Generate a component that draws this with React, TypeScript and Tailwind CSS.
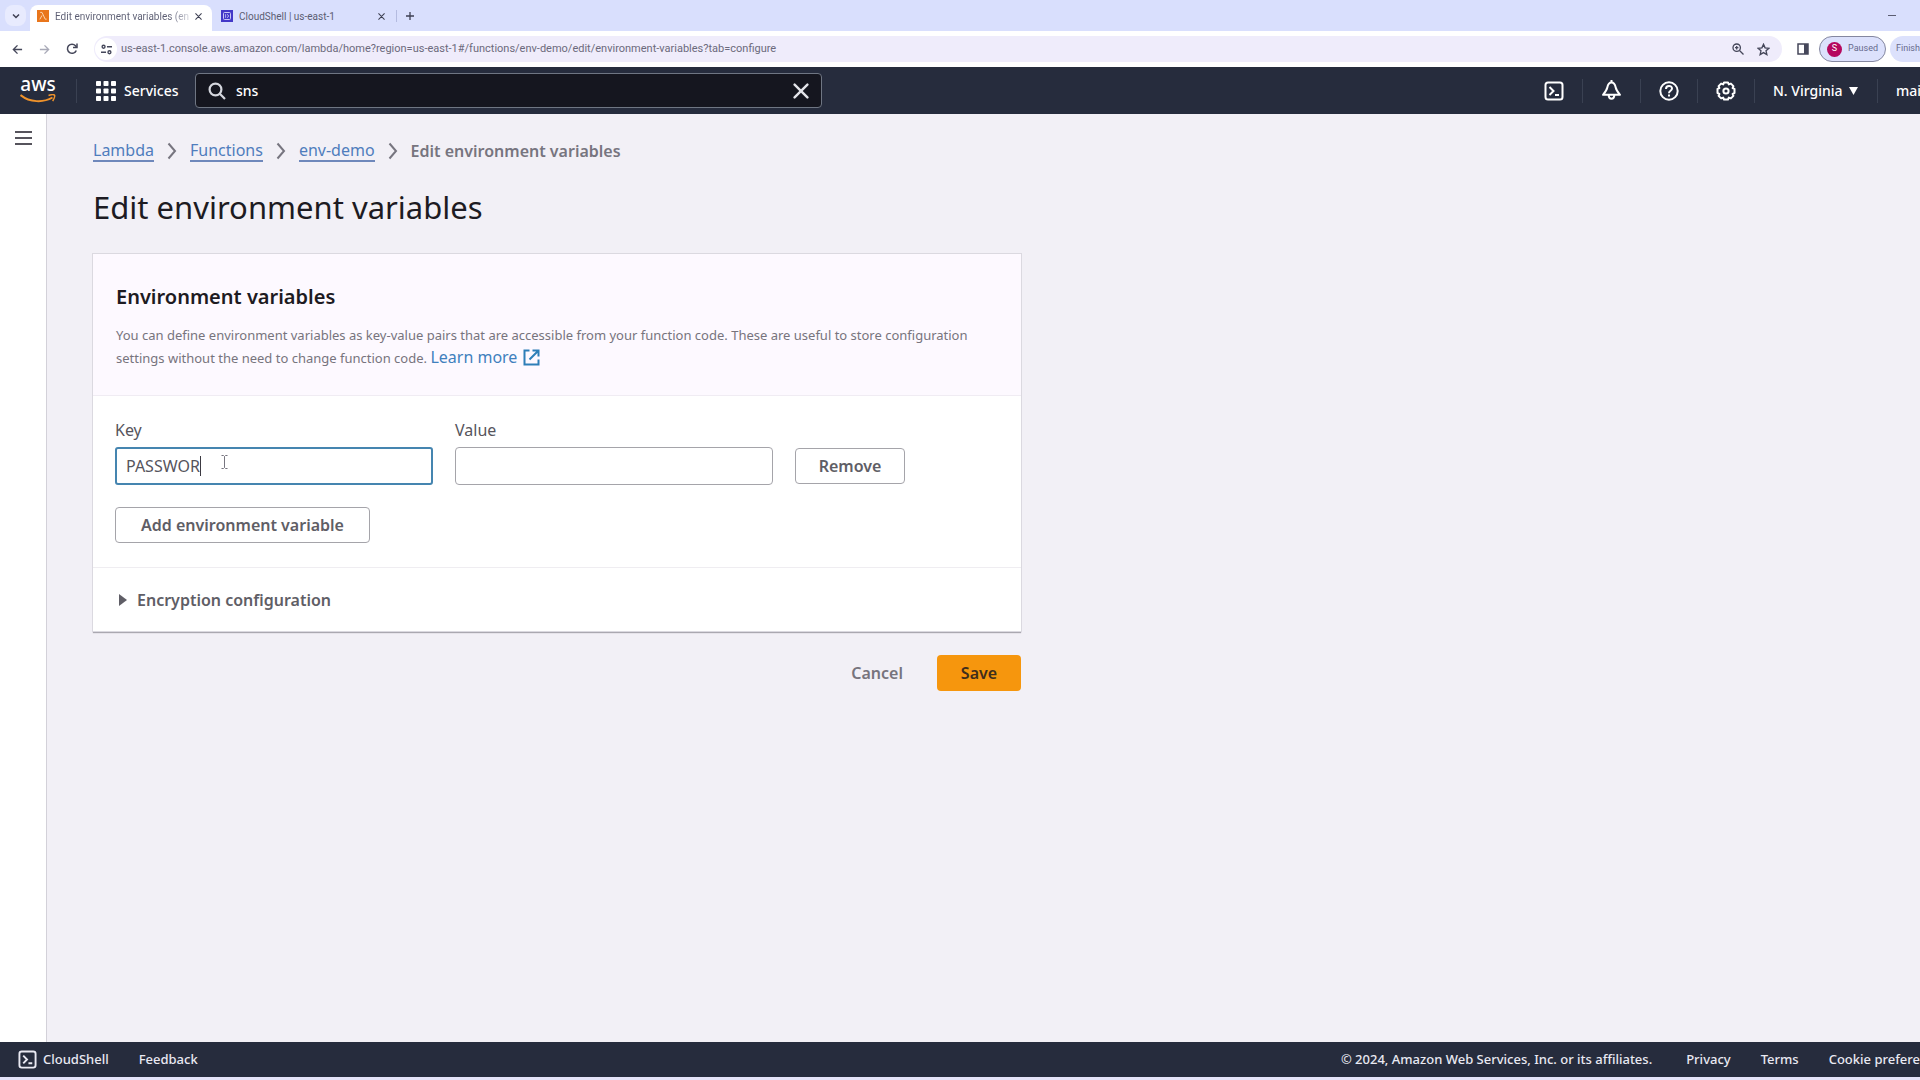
import React from "react";

function LambdaFavicon() {
  return (
    <svg className="size-3 shrink-0" viewBox="0 0 12 12" aria-hidden="true">
      <rect width="12" height="12" fill="#e9761c" />
      <path d="M3.2 2.4h1.8l3.2 6.8h1.4M5 5.4 2.8 9.4" fill="none" stroke="#fbd3ac" strokeWidth="1" />
    </svg>
  );
}

function CloudShellFavicon() {
  return (
    <svg className="size-3 shrink-0" viewBox="0 0 12 12" aria-hidden="true">
      <rect width="12" height="12" fill="#4338c8" />
      <rect x="2.5" y="2.5" width="7" height="7" rx="1" fill="none" stroke="#c9c6f6" strokeWidth="1" />
      <path d="M4.6 4.2v3.6M6 4.4c2 .3 2 2.900 0 3.200" fill="none" stroke="#c9c6f6" strokeWidth="0.800" />
    </svg>
  );
}

function Cross({ className }: { className: string }) {
  return (
    <svg className={className} viewBox="0 0 10 10" fill="none" stroke="currentColor" aria-hidden="true">
      <path d="m1 1 8 8M9 1 1 9" strokeWidth="1.500" strokeLinecap="round" />
    </svg>
  );
}

function Back({ className }: { className: string }) {
  return (
    <svg className={className} viewBox="0 0 12 12" fill="none" stroke="currentColor" strokeWidth="1.500" aria-hidden="true">
      <path d="M11 6H1.500M6 1.500 1.500 6 6 10.500" />
    </svg>
  );
}

function ShellIcon({ className }: { className: string }) {
  return (
    <svg className={className} viewBox="0 0 20 20" fill="none" stroke="currentColor" strokeWidth="2" aria-hidden="true">
      <rect x="1.500" y="1.500" width="17" height="17" rx="2.500" />
      <path d="m5.500 6 4 4-4 4M11 14h4" />
    </svg>
  );
}

function AwsLogo() {
  return (
    <a href="#home" aria-label="AWS home" className="flex w-9 shrink-0 flex-col items-center">
      <span className="h-4 text-[19px] leading-[12px] font-medium text-white">aws</span>
      <svg className="h-2.5 w-9" viewBox="0 0 36 10" fill="none" aria-hidden="true">
        <path d="M0.500 1C10 8.500 23 9 32.500 3.500" stroke="#f0932b" strokeWidth="2" />
        <path d="M28.500 1.500c3-1 5.500-1 6 -.3.500.8-.3 3.500-1.800 6" stroke="#f0932b" strokeWidth="1.500" />
      </svg>
    </a>
  );
}

function BrowserTabs() {
  return (
    <div className="flex h-[31px] items-end bg-[#d9dffd] font-[Roboto,sans-serif] text-[10px] text-[#5b5d72]">
      <button aria-label="Search tabs" className="mb-[5px] ml-[5px] flex size-[21px] shrink-0 items-center justify-center rounded-lg bg-[#e8ebfe]">
        <svg className="h-2 w-2" viewBox="0 0 8 8" fill="none" stroke="#3e4053" strokeWidth="1.500" aria-hidden="true">
          <path d="m1 2.500 3 3 3-3" />
        </svg>
      </button>
      <div className="ml-1 flex h-[26px] w-[182px] items-center rounded-t-lg bg-white pr-[10px] pb-1 pl-[7px]">
        <LambdaFavicon />
        <span className="ml-[6px] bg-gradient-to-r from-[#5b5d72] from-85% to-[#d5d6de] bg-clip-text whitespace-nowrap text-transparent">
          Edit environment variables (en
        </span>
        <button aria-label="Close tab" className="ml-auto text-[#3e4053]"><Cross className="size-[7px]" /></button>
      </div>
      <div className="flex h-[26px] w-[185px] items-center pb-1 pl-[9px]">
        <CloudShellFavicon />
        <span className="ml-[6px] whitespace-nowrap">CloudShell | us-east-1</span>
        <button aria-label="Close tab" className="ml-auto text-[#3e4053]"><Cross className="size-[7px]" /></button>
        <span className="ml-[11px] h-3 w-px bg-[#b4bbe0]" />
      </div>
      <button aria-label="New tab" className="mb-[11px] ml-[9px] text-[#3e4053]">
        <svg className="size-2" viewBox="0 0 8 8" stroke="currentColor" strokeWidth="1.300" aria-hidden="true"><path d="M4 0v8M0 4h8" /></svg>
      </button>
      <button aria-label="Minimize" className="mr-6 mb-[15px] ml-auto h-px w-2 bg-[#5b5d72]" />
    </div>
  );
}

function AddressBar() {
  return (
    <div className="flex h-9 items-center overflow-hidden bg-white font-[Roboto,sans-serif] text-[#45475a]">
      <div className="flex w-[94px] shrink-0 items-center gap-4 pl-3">
        <button aria-label="Back"><Back className="size-[11px]" /></button>
        <button aria-label="Forward" className="text-[#a9aab8]"><Back className="size-[11px] rotate-180" /></button>
        <button aria-label="Reload">
          <svg className="size-3" viewBox="0 0 12 12" fill="none" stroke="currentColor" strokeWidth="1.500" aria-hidden="true">
            <path d="M10.300 7.500A4.600 4.600 0 1 1 9.500 2.700L10.500 4" />
            <path d="M11 .5v4H7" />
          </svg>
        </button>
      </div>
      <div className="flex h-[26px] min-w-0 flex-1 items-center rounded-full bg-[#efecfb] pr-3 pl-px">
        <button aria-label="View site information" className="flex size-[22px] shrink-0 items-center justify-center rounded-full bg-white">
          <svg className="size-[11px]" viewBox="0 0 12 12" fill="none" stroke="currentColor" strokeWidth="1.500" aria-hidden="true">
            <circle cx="2.800" cy="3" r="1.600" />
            <path d="M6.500 3H12M0 9h5.500" />
            <circle cx="9.200" cy="9" r="1.600" />
          </svg>
        </button>
        <input
          aria-label="Address"
          readOnly
          className="ml-1 min-w-0 flex-1 bg-transparent text-[11px] text-[#6c6a7c] outline-none"
          value="us-east-1.console.aws.amazon.com/lambda/home?region=us-east-1#/functions/env-demo/edit/environment-variables?tab=configure"
        />
        <button aria-label="Zoom">
          <svg className="size-3" viewBox="0 0 12 12" fill="none" stroke="currentColor" strokeWidth="1.300" aria-hidden="true">
            <circle cx="4.700" cy="4.700" r="3.700" />
            <path d="m7.500 7.500 4 4M3 4.700h3.400M4.700 3v3.400" />
          </svg>
        </button>
        <button aria-label="Bookmark" className="ml-[13px]">
          <svg className="size-[13px]" viewBox="0 0 24 24" fill="none" stroke="currentColor" strokeWidth="2.500" aria-hidden="true">
            <path d="m12 2.500 2.900 6.500 7.100.7-5.300 4.700 1.500 7-6.200-3.700-6.200 3.700 1.500-7L2 9.700 9.100 9z" />
          </svg>
        </button>
      </div>
      <button aria-label="Side panel" className="ml-[15px] shrink-0">
        <svg className="size-3" viewBox="0 0 12 12" aria-hidden="true">
          <rect x="1" y="1" width="10" height="10" fill="none" stroke="currentColor" strokeWidth="1.500" />
          <rect x="7" y="1" width="4" height="10" fill="currentColor" />
        </svg>
      </button>
      <button className="ml-[10px] flex h-[26px] w-[67px] shrink-0 items-center gap-[6px] rounded-full border border-[#8487a0] bg-[#dce1fc] pl-[7px] text-[9px] text-[#666a8c]">
        <span className="flex size-[15px] items-center justify-center rounded-full bg-[#b5085e] text-white">S</span>
        Paused
      </button>
      <button className="ml-1 h-[26px] w-[30px] shrink-0 rounded-l-full bg-[#dce1fc] pl-[6px] text-left text-[9px] whitespace-nowrap text-[#666a8c]">
        Finish
      </button>
    </div>
  );
}

function Divider() {
  return <span className="h-6 w-px shrink-0 bg-[#3a4152]" />;
}

function ConsoleHeader() {
  return (
    <header className="flex h-[47px] items-center overflow-hidden bg-[#262c3d] text-sm font-medium text-white">
      <div className="flex w-[195px] shrink-0 items-center pl-5">
        <AwsLogo />
        <span className="ml-5"><span className="block h-6 w-px bg-[#3a4152]" /></span>
        <button className="ml-[19px] flex items-center gap-2">
          <svg className="size-5" viewBox="0 0 20 20" fill="currentColor" aria-hidden="true">
            {[0, 7.500, 15].map((y) =>
              [0, 7.500, 15].map((x) => <rect key={`${x}-${y}`} x={x} y={y} width="5" height="5" rx="0.800" />)
            )}
          </svg>
          Services
        </button>
      </div>
      <div className="flex h-[35px] w-[627px] items-center rounded-sm border border-[#6f7683] bg-[#15161f] pr-3 pl-3">
        <svg className="size-[18px] shrink-0" viewBox="0 0 18 18" fill="none" stroke="#d5d7de" strokeWidth="2.200" aria-hidden="true">
          <circle cx="7.500" cy="7.500" r="5.900" />
          <path d="m11.800 11.800 5.200 5.200" />
        </svg>
        <input aria-label="Search" defaultValue="sns" className="ml-[10px] min-w-0 flex-1 bg-transparent outline-none" />
        <button aria-label="Clear search"><Cross className="size-4 text-[#e4e5ea]" /></button>
      </div>
      <div className="ml-auto flex shrink-0 items-center">
        <button aria-label="CloudShell" className="mr-[18px]"><ShellIcon className="size-5" /></button>
        <Divider />
        <button aria-label="Notifications" className="mx-[18px]">
          <svg className="size-[21px]" viewBox="0 0 21 21" fill="none" stroke="currentColor" strokeWidth="2" strokeLinejoin="round" aria-hidden="true">
            <path d="M10.500 2.500C7.800 2.500 6.800 5 6.300 7.500 5.700 10.500 4 12.500 2 14.800h17c-2-2.300-3.700-4.300-4.300-7.300-.5-2.500-1.500-5-4.200-5z" />
            <path d="M7.700 15c0 2 1 3.800 2.800 3.800s2.800-1.800 2.800-3.800M10.500 0v2.500" />
          </svg>
        </button>
        <Divider />
        <button aria-label="Help" className="mx-[18px]">
          <svg className="size-5" viewBox="0 0 20 20" fill="none" stroke="currentColor" strokeWidth="2" aria-hidden="true">
            <circle cx="10" cy="10" r="8.700" />
            <path d="M7 8c0-4 6-4 6-.5 0 2.300-3 2.200-3 4.700M10 13.500v2" />
          </svg>
        </button>
        <Divider />
        <button aria-label="Settings" className="mx-[18px]">
          <svg className="size-5" viewBox="0 0 20 20" fill="none" stroke="currentColor" strokeWidth="2" strokeLinejoin="round" aria-hidden="true">
            <path d="M8 1.500h4l.8 1.900 2.100-.8 2.500 2.500-.8 2.100 1.900.8v4l-1.900.8.8 2.100-2.500 2.500-2.100-.8-.8 1.900H8l-.8-1.900-2.100.8-2.500-2.500.8-2.100-1.900-.8V8l1.900-.8-.8-2.100 2.500-2.500 2.100.8z" />
            <circle cx="10" cy="10" r="2.600" />
          </svg>
        </button>
        <Divider />
        <button className="ml-[18px] flex w-[104px] items-center gap-[6px] whitespace-nowrap">
          N. Virginia
          <svg className="h-2 w-[9px] shrink-0" viewBox="0 0 9 8" fill="currentColor" aria-hidden="true"><path d="M0 0h9L4.500 8z" /></svg>
        </button>
        <Divider />
        <button className="ml-[18px] w-6 text-left">mai</button>
      </div>
    </header>
  );
}

function Chevron() {
  return (
    <svg className="h-[18px] w-[10px] shrink-0" viewBox="0 0 10 18" fill="none" stroke="#77757f" strokeWidth="2" aria-hidden="true">
      <path d="m1.500 1.500 6.500 7.500-6.500 7.500" />
    </svg>
  );
}

function Breadcrumbs() {
  const link = "border-b-2 border-[#6f88bb] leading-5 text-[#4f7dbd]";
  return (
    <nav aria-label="Breadcrumb" className="flex items-center gap-[13px] text-base">
      <a href="#lambda" className={link}>Lambda</a>
      <Chevron />
      <a href="#functions" className={link}>Functions</a>
      <Chevron />
      <a href="#env-demo" className={link}>env-demo</a>
      <Chevron />
      <span className="font-semibold text-[#77757f]">Edit environment variables</span>
    </nav>
  );
}

const outlineButton =
  "h-9 rounded-sm border border-[#a5a4aa] bg-white text-base font-semibold whitespace-nowrap text-[#5f5e66]";

function VariablesCard() {
  return (
    <section className="mt-[27px] bg-white shadow-[0_0_0_1px_#dbd9e0,0_2px_1px_#aaa8b0]">
      <div className="h-[142px] border-b border-[#f0ecf3] bg-[#fdf9ff] px-[23px] pt-[29px]">
        <h2 className="text-xl leading-7 font-semibold text-[#1d1b22]">Environment variables</h2>
        <p className="mt-[13px] text-[13px] leading-[22px] text-[#77747d]">
          You can define environment variables as key-value pairs that are accessible from your function code. These are
          useful to store configuration
          <br />
          settings without the need to change function code.{" "}
          <a href="#learn-more" className="text-base leading-[22px] whitespace-nowrap text-[#4080bd]">
            Learn more
            <svg className="ml-[6px] inline-block size-[17px] align-[-3px]" viewBox="0 0 17 17" fill="none" stroke="#2e7fb8" strokeWidth="2" aria-hidden="true">
              <path d="M6.500 1.500H1.500v14h14v-5M9.500 1.500h6v6M15.500 1.500 6.500 10.500" />
            </svg>
          </a>
        </p>
      </div>
      <div className="px-[22px] pt-[23px] pb-6">
        <div className="flex items-end gap-[22px]">
          <div className="flex w-[318px] flex-col gap-[6px]">
            <label htmlFor="key" className="text-base leading-[22px] text-[#56545c]">Key</label>
            <div className="relative">
              <input
                id="key"
                defaultValue="PASSWOR"
                className="block h-[38px] w-full rounded-[3px] border-2 border-[#4585b0] bg-white px-[9px] text-base text-[#56545c] outline-none"
              />
              <span className="absolute top-[9px] left-[85px] h-5 w-px bg-[#3c3a42]" />
              <svg className="absolute top-2 left-[106px] h-[14px] w-[7px]" viewBox="0 0 7 14" fill="none" stroke="#77757f" aria-hidden="true">
                <path d="M0.500 .5h2l1 1 1-1h2M3.500 1.500v11M.5 13.500h2l1-1 1 1h2" />
              </svg>
            </div>
          </div>
          <div className="flex w-[318px] flex-col gap-[6px]">
            <label htmlFor="value" className="text-base leading-[22px] text-[#56545c]">Value</label>
            <input id="value" className="block h-[38px] w-full rounded-sm border border-[#a5a4aa] bg-white px-[9px] text-base outline-none" />
          </div>
          <button className={`${outlineButton} mb-px w-[110px]`}>Remove</button>
        </div>
        <button className={`${outlineButton} mt-[22px] w-[255px]`}>Add environment variable</button>
      </div>
      <div className="flex h-16 items-center border-t border-[#efedf1] px-[22px]">
        <button className="flex items-center gap-[10px] pl-1 text-base font-semibold text-[#5f5e66]">
          <svg className="h-3 w-2" viewBox="0 0 8 12" fill="currentColor" aria-hidden="true"><path d="M0 0v12l8-6z" /></svg>
          Encryption configuration
        </button>
      </div>
    </section>
  );
}

function Footer() {
  return (
    <footer className="flex h-[35px] shrink-0 items-center justify-between overflow-hidden bg-[#262c3d] pl-[18px] text-[13px] font-medium text-[#e9e9f2]">
      <div className="flex items-center gap-[30px]">
        <button className="flex items-center gap-[6px]"><ShellIcon className="size-[19px]" />CloudShell</button>
        <a href="#feedback">Feedback</a>
      </div>
      <div className="flex items-center whitespace-nowrap">
        <span>© 2024, Amazon Web Services, Inc. or its affiliates.</span>
        <a href="#privacy" className="ml-[34px]">Privacy</a>
        <a href="#terms" className="ml-[30px]">Terms</a>
        <a href="#cookies" className="ml-[30px]">Cookie prefere</a>
      </div>
    </footer>
  );
}

export default function App() {
  return (
    <div className="flex min-h-screen flex-col border-b-[3px] border-[#e4e3f8] bg-[#f2f0f6] font-['Noto_Sans','Open_Sans',sans-serif]">
      <BrowserTabs />
      <AddressBar />
      <ConsoleHeader />
      <div className="flex flex-1">
        <aside className="w-[47px] shrink-0 border-r border-[#d3d1d9] bg-white pt-[17px] pl-[15px]">
          <button aria-label="Open navigation" className="block">
            <svg className="h-[14px] w-[17px]" viewBox="0 0 17 14" stroke="#56545c" strokeWidth="2" aria-hidden="true">
              <path d="M0 1h17M0 7h17M0 13h17" />
            </svg>
          </button>
        </aside>
        <main className="flex-1 px-[46px] pt-[25px]">
          <div className="max-w-[928px]">
            <Breadcrumbs />
            <h1 className="mt-6 text-[31px] leading-10 text-[#1d1b22]">Edit environment variables</h1>
            <VariablesCard />
            <div className="mt-6 flex items-center justify-end gap-[34px]">
              <button className="text-base font-semibold text-[#77747d]">Cancel</button>
              <button className="h-9 w-[84px] rounded-sm bg-[#f6960d] text-base font-semibold text-[#3f2d1c]">Save</button>
            </div>
          </div>
        </main>
      </div>
      <Footer />
    </div>
  );
}
